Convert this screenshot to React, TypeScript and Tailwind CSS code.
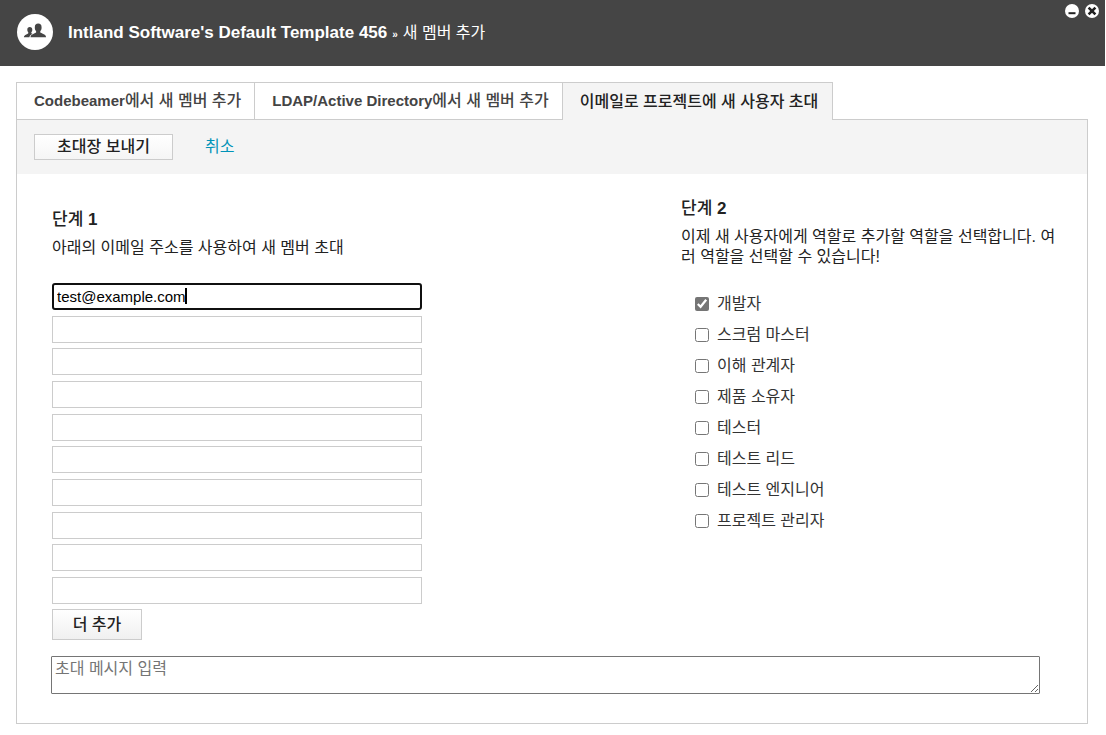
import { useState } from "react";

const ROLES = [
  "개발자",
  "스크럼 마스터",
  "이해 관계자",
  "제품 소유자",
  "테스터",
  "테스트 리드",
  "테스트 엔지니어",
  "프로젝트 관리자",
];

const TABS = [
  { id: "codebeamer", latin: "Codebeamer", label: "에서 새 멤버 추가" },
  { id: "ldap", latin: "LDAP/Active Directory", label: "에서 새 멤버 추가" },
  { id: "email", latin: "", label: "이메일로 프로젝트에 새 사용자 초대" },
];

const DEFAULT_EMAIL = "test@example.com";

function MembersIcon() {
  return (
    <svg width="36" height="36" viewBox="0 0 36 36" aria-hidden="true">
      <circle cx="18" cy="18" r="18" fill="#fff" />
      <path
        fill="#454545"
        d="M17.8 13.4c0-2.6 1.2-3.8 3.4-3.8s3.4 1.2 3.4 3.8c0 1.7-.5 2.8-1.3 3.6v1.6c.6.9 5.5 1.2 5.8 4.7H13.5c.3-3.5 5-3.8 5.6-4.7V17c-.8-.8-1.3-1.9-1.3-3.6z"
      />
      <path
        fill="#454545"
        d="M10.3 15.8c0-1.9.9-2.8 2.5-2.8s2.5.9 2.5 2.8c0 1.2-.4 2-1 2.6v.9l1.2.5c-1.7.8-2.8 1.8-3.1 3.5H6.9c.2-2.6 3.8-3 4.4-4v-.9c-.6-.6-1-1.4-1-2.6z"
      />
    </svg>
  );
}

function Header() {
  return (
    <header className="mr-px flex h-[66px] items-start justify-between bg-[#454545] text-white">
      <div className="flex items-center gap-[15px] pt-[14px] pl-[17px]">
        <MembersIcon />
        <h1 className="pt-1 text-base leading-6">
          <b className="text-[17px]">Intland Software's Default Template 456</b>
          <span className="mx-[5px] text-[10px] font-bold">»</span>
          <span>새 멤버 추가</span>
        </h1>
      </div>
      <div className="flex gap-[6px] pt-1 pr-[6px]">
        <button type="button" aria-label="최소화">
          <svg width="14" height="14" viewBox="0 0 14 14">
            <circle cx="7" cy="7" r="7" fill="#fff" />
            <path d="M3.5 9.2h7" stroke="#222" strokeWidth="2" />
          </svg>
        </button>
        <button type="button" aria-label="닫기">
          <svg width="14" height="14" viewBox="0 0 14 14">
            <circle cx="7" cy="7" r="7" fill="#fff" />
            <path d="M3.6 3.6l6.8 6.8M10.4 3.6l-6.8 6.8" stroke="#222" strokeWidth="2.6" />
          </svg>
        </button>
      </div>
    </header>
  );
}

export default function App() {
  const [tab, setTab] = useState("email");
  const [emails, setEmails] = useState([DEFAULT_EMAIL, ...Array(9).fill("")]);
  const [roles, setRoles] = useState(["개발자"]);

  const setEmail = (i: number, value: string) =>
    setEmails(emails.map((e, n) => (n === i ? value : e)));

  const toggleRole = (role: string) =>
    setRoles(roles.includes(role) ? roles.filter((r) => r !== role) : [...roles, role]);

  return (
    <div className="bg-white font-['Liberation_Sans','Noto_Sans_CJK_KR',sans-serif] text-base text-[#222]">
      <Header />

      <main className="mt-4 mr-[18px] mb-[11px] ml-4">
        {/* Tabs */}
        <div role="tablist" className="flex">
          {TABS.map((t) => (
            <button
              key={t.id}
              type="button"
              role="tab"
              aria-selected={tab === t.id}
              onClick={() => setTab(t.id)}
              className={
                tab === t.id
                  ? "relative -mb-px h-[38px] border border-b-0 border-[#ccc] bg-[#f4f4f4] pr-[14px] pl-[17px]"
                  : "h-[37px] border border-r-0 border-b-0 border-[#ccc] pr-[13px] pl-[17px] text-[#444]"
              }
            >
              <b className="text-[15px]">{t.latin}</b>
              <span className="font-medium">{t.label}</span>
            </button>
          ))}
        </div>

        <form className="border border-[#ccc] pb-[29px]" onSubmit={(e) => e.preventDefault()}>
          {/* Actions */}
          <div className="flex h-[54px] items-center gap-8 bg-[#f4f4f4] pl-[17px]">
            <button
              type="submit"
              className="h-[26px] w-[139px] border border-[#ccc] bg-linear-to-b from-white to-[#f5f5f5] leading-6 font-medium"
            >
              초대장 보내기
            </button>
            <a href="#" className="text-[#0093b8]">취소</a>
          </div>

          <div className="flex justify-between pr-[30px] pl-[35px]">
            {/* Step 1 */}
            <section className="w-[370px] pt-[34px]">
              <h2 className="text-[17px] leading-6 font-bold">
                <span className="font-medium">단계</span> 1
              </h2>
              <p className="mt-[6px] leading-5">아래의 이메일 주소를 사용하여 새 멤버 초대</p>
              <div className="mt-[25px] flex h-[321px] flex-col justify-between">
                {emails.map((email, i) => (
                  <div key={i} className="relative h-[27px]">
                    <input
                      type="email"
                      aria-label={`이메일 ${i + 1}`}
                      autoFocus={i === 0}
                      value={email}
                      onChange={(e) => setEmail(i, e.target.value)}
                      className="block h-full w-full border border-[#ccc] px-1 text-[15px] text-black focus:rounded-[3px] focus:border-2 focus:border-[#101010] focus:px-[3px] focus:outline-none"
                    />
                    {i === 0 && email === DEFAULT_EMAIL && (
                      <span className="absolute top-[5px] left-[133px] h-4 w-0.5 bg-black" />
                    )}
                  </div>
                ))}
              </div>
              <button
                type="button"
                onClick={() => setEmails([...emails, ""])}
                className="mt-[5px] block h-[31px] w-[90px] border border-[#ccc] bg-linear-to-b from-white to-[#f0f0f0] font-medium"
              >
                더 추가
              </button>
            </section>

            {/* Step 2 */}
            <section className="w-[376px] pt-[23px]">
              <h2 className="text-[17px] leading-6 font-bold">
                <span className="font-medium">단계</span> 2
              </h2>
              <p className="mt-[6px] leading-5">
                이제 새 사용자에게 역할로 추가할 역할을 선택합니다. 여러 역할을 선택할 수 있습니다!
              </p>
              <ul className="mt-[25px] ml-[14px]">
                {ROLES.map((role) => (
                  <li key={role} className="h-[31px]">
                    <label className="inline-flex items-center gap-2 leading-6 text-[#333]">
                      <input
                        type="checkbox"
                        checked={roles.includes(role)}
                        onChange={() => toggleRole(role)}
                        className="size-[14px] accent-[#757575]"
                      />
                      {role}
                    </label>
                  </li>
                ))}
              </ul>
            </section>
          </div>

          <textarea
            aria-label="초대 메시지"
            placeholder="초대 메시지 입력"
            className="mt-4 mr-[47px] ml-[34px] block h-[38px] w-[calc(100%-81px)] rounded-[1px] border border-[#757575] px-[3px] leading-6 placeholder:text-[#757575]"
          />
        </form>
      </main>
    </div>
  );
}
